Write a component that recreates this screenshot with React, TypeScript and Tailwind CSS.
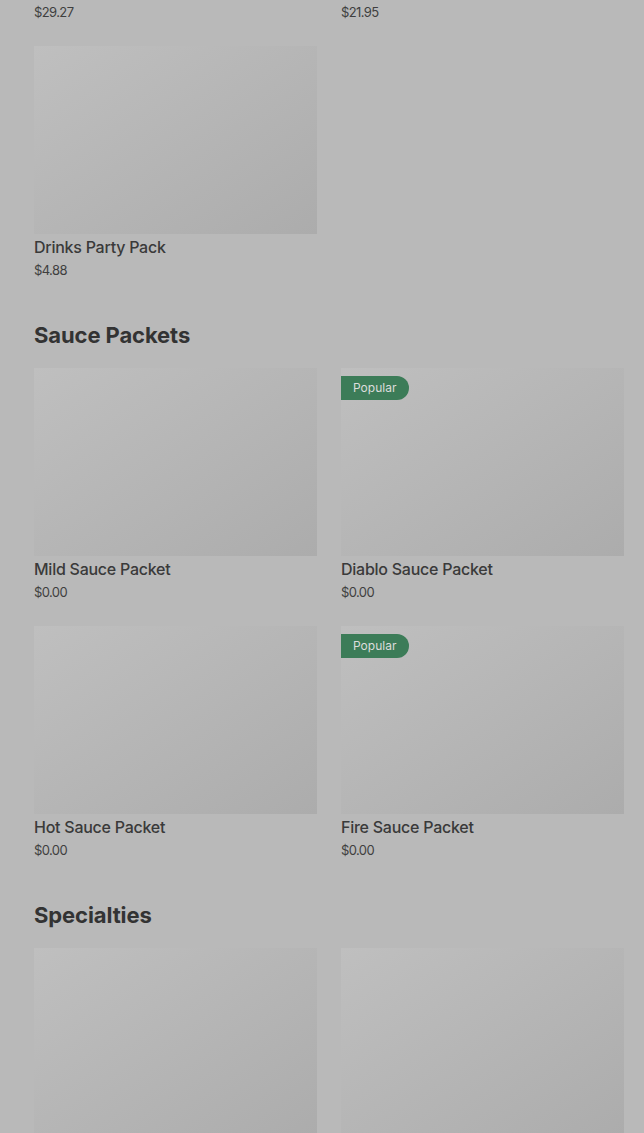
type Item = { name: string; price: string; popular?: boolean };

const sections: { title?: string; items: Item[] }[] = [
  {
    items: [
      { name: "Family Taco Pack", price: "$29.27" },
      { name: "Burrito Box", price: "$21.95" },
      { name: "Drinks Party Pack", price: "$4.88" },
    ],
  },
  {
    title: "Sauce Packets",
    items: [
      { name: "Mild Sauce Packet", price: "$0.00" },
      { name: "Diablo Sauce Packet", price: "$0.00", popular: true },
      { name: "Hot Sauce Packet", price: "$0.00" },
      { name: "Fire Sauce Packet", price: "$0.00", popular: true },
    ],
  },
  {
    title: "Specialties",
    items: [
      { name: "Cheesy Gordita Crunch", price: "$5.49" },
      { name: "Crunchwrap Supreme", price: "$5.99" },
    ],
  },
];

function ItemCard({ item }: { item: Item }) {
  return (
    <div className="flex flex-col">
      <div className="relative h-[188px] bg-gradient-to-br from-[#bfbfbf] to-[#acacac]">
        {item.popular ? (
          <span className="absolute left-0 top-[8px] flex h-[24px] items-center rounded-r-full bg-[#3c7c58] pl-[12px] pr-[13px] text-[12px] text-[#dcdcdc]">
            Popular
          </span>
        ) : null}
      </div>
      <p className="mt-[3px] text-[16px] font-medium leading-5 tracking-[-0.25px] text-[#3a3a3a]">
        {item.name}
      </p>
      <p className="mt-[4px] text-[13px] leading-[18px] tracking-[-0.6px] text-[#3f3f3f]">
        {item.price}
      </p>
    </div>
  );
}

export default function App() {
  return (
    <div className="h-[1133px] overflow-hidden bg-[#b9b9b9] font-['Inter',sans-serif]">
      <div className="mt-[-212px] pl-[34px] pr-[20px]">
        {sections.map((section, i) => (
          <section key={i} className="mb-[42px]">
            {section.title ? (
              <h2 className="mb-[19px] text-[22px] font-bold leading-[28px] tracking-[-0.1px] text-[#333333]">
                {section.title}
              </h2>
            ) : null}
            <div className="grid grid-cols-2 gap-x-[24px] gap-y-[25px]">
              {section.items.map((item) => (
                <ItemCard key={item.name} item={item} />
              ))}
            </div>
          </section>
        ))}
      </div>
    </div>
  );
}
